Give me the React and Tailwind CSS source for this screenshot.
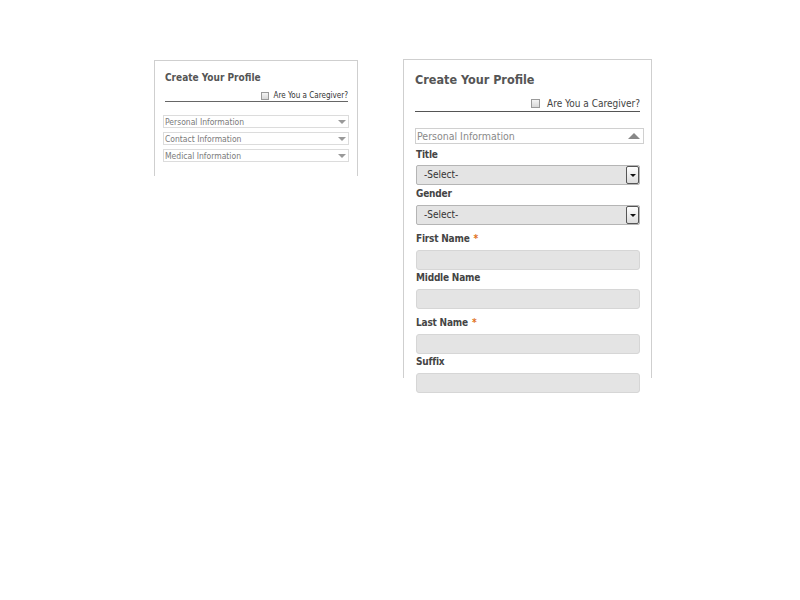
const font = { fontFamily: '"DejaVu Sans Condensed", "DejaVu Sans", Tahoma, sans-serif' };

const sections = ['Personal Information', 'Contact Information', 'Medical Information'];

function Check({ size }) {
  return <span className={`${size} inline-block border border-[#9a9a9a] bg-gradient-to-b from-[#f4f4f4] to-[#d8d8d8]`} />;
}

function SmallPanel() {
  return (
    <div className="mt-[1px] h-[116px] w-[204px] border border-b-0 border-[#cfcfcf] bg-white px-[8px]">
      <div className="ml-[2px] mt-[10px] text-[10px] font-bold leading-[13px] text-[#555]">Create Your Profile</div>
      <div className="mt-[7px] ml-[2px] mr-[1px] flex items-center justify-end gap-[5px] border-b border-[#666]">
        <Check size="h-[8px] w-[8px]" />
        <span className="text-[8px] leading-[10px] text-[#333]">Are You a Caregiver?</span>
      </div>
      <div className="mt-[13px] flex flex-col gap-[4px]">
        {sections.map((s) => (
          <div key={s} className="flex h-[13px] items-center justify-between border border-[#dcdcdc] pl-[1px] pr-[2px]">
            <span className="text-[8.5px] leading-[10px] text-[#7a7a7a]">{s}</span>
            <span className="h-0 w-0 border-x-[4px] border-t-[4px] border-x-transparent border-t-[#999]" />
          </div>
        ))}
      </div>
    </div>
  );
}

function Label({ children, req, className = '' }) {
  return (
    <div className={`ml-[1px] h-[14px] text-[10px] font-bold leading-[14px] tracking-[-0.2px] text-[#444] ${className}`}>
      {children}
      {req && <span className="ml-[4px] text-[#e07020]">*</span>}
    </div>
  );
}

function Select({ className = '' }) {
  return (
    <div className={`ml-[1px] flex h-[20px] w-[224px] items-stretch rounded-[2px] border border-[#b5b5b5] bg-[#e4e4e4] ${className}`}>
      <span className="flex-1 pl-[7px] text-[10px] leading-[18px] text-[#333]">-Select-</span>
      <span className="flex w-[13px] items-center justify-center rounded-[2px] border border-[#555] bg-gradient-to-b from-[#ffffff] to-[#dcdcdc]">
        <span className="h-0 w-0 border-x-[3px] border-t-[3px] border-x-transparent border-t-[#111]" />
      </span>
    </div>
  );
}

function Input({ className = '' }) {
  return <div className={`ml-[1px] h-[20px] w-[224px] rounded-[3px] border border-[#d6d6d6] bg-[#e4e4e4] ${className}`} />;
}

function BigPanel() {
  return (
    <div className="ml-[45px] h-[319px] w-[249px] border border-b-0 border-[#cfcfcf] bg-white pl-[11px] pr-[7px]">
      <div className="mt-[12px] text-[12.5px] font-bold leading-[16px] text-[#555]">Create Your Profile</div>
      <div className="mt-[9px] mr-[4px] flex items-center justify-end gap-[7px] border-b border-[#555] pb-[1px]">
        <Check size="h-[9px] w-[9px]" />
        <span className="text-[10px] leading-[13px] text-[#444]">Are You a Caregiver?</span>
      </div>
      <div className="mt-[16px] flex h-[16px] items-center justify-between border border-[#d0d0d0] pl-[1px] pr-[3px]">
        <span className="text-[10.5px] leading-[14px] text-[#8a8a8a]">Personal Information</span>
        <span className="h-0 w-0 border-x-[6px] border-b-[6px] border-x-transparent border-b-[#888]" />
      </div>
      <Label className="mt-[4px]">Title</Label>
      <Select className="mt-[3px]" />
      <Label className="mt-[2px]">Gender</Label>
      <Select className="mt-[4px]" />
      <Label className="mt-[7px]" req>First Name</Label>
      <Input className="mt-[4px]" />
      <Label className="mt-[1px]">Middle Name</Label>
      <Input className="mt-[4px]" />
      <Label className="mt-[7px]" req>Last Name</Label>
      <Input className="mt-[4px]" />
      <Label className="mt-[1px]">Suffix</Label>
      <Input className="mt-[4px]" />
    </div>
  );
}

export default function App() {
  return (
    <div className="min-h-[600px] w-[800px] bg-white pl-[154px] pt-[59px]" style={font}>
      <div className="flex items-start">
        <SmallPanel />
        <BigPanel />
      </div>
    </div>
  );
}
